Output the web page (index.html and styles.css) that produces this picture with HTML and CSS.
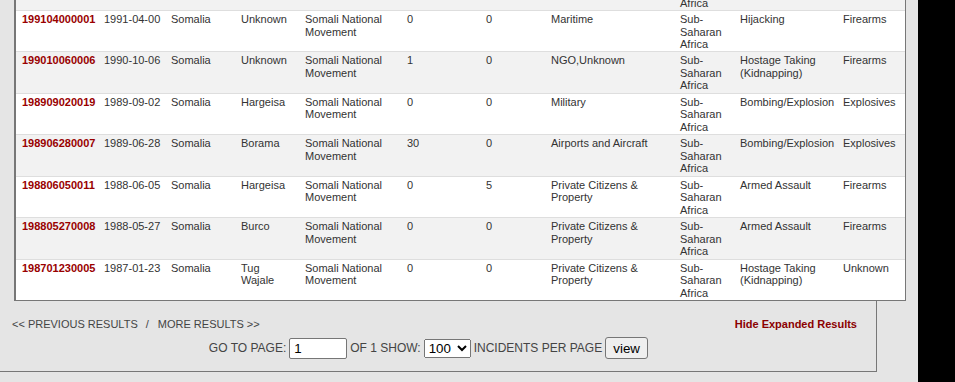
FILE: index.html
```html
<!DOCTYPE html>
<html lang="en">
<head>
<meta charset="utf-8">
<title>Search Results</title>
<link rel="stylesheet" href="styles.css">
</head>
<body>
<div class="page">
  <div class="results">
    <table class="incidents">
      <colgroup>
        <col class="c-id"><col class="c-date"><col class="c-country"><col class="c-city"><col class="c-group"><col class="c-killed"><col class="c-wounded"><col class="c-target"><col class="c-region"><col class="c-attack"><col class="c-weapon">
      </colgroup>
      <tbody>
        <tr class="alt">
          <td class="id"></td><td class="date"></td><td></td><td class="city"></td><td></td><td></td><td></td><td></td><td>Sub-Saharan Africa</td><td class="attack"></td><td></td>
        </tr>
        <tr>
          <td class="id"><a href="#">199104000001</a></td><td class="date">1991-04-00</td><td>Somalia</td><td class="city">Unknown</td><td>Somali National Movement</td><td>0</td><td>0</td><td>Maritime</td><td>Sub-Saharan Africa</td><td class="attack">Hijacking</td><td>Firearms</td>
        </tr>
        <tr class="alt">
          <td class="id"><a href="#">199010060006</a></td><td class="date">1990-10-06</td><td>Somalia</td><td class="city">Unknown</td><td>Somali National Movement</td><td>1</td><td>0</td><td>NGO,Unknown</td><td>Sub-Saharan Africa</td><td class="attack">Hostage Taking (Kidnapping)</td><td>Firearms</td>
        </tr>
        <tr>
          <td class="id"><a href="#">198909020019</a></td><td class="date">1989-09-02</td><td>Somalia</td><td class="city">Hargeisa</td><td>Somali National Movement</td><td>0</td><td>0</td><td>Military</td><td>Sub-Saharan Africa</td><td class="attack">Bombing/Explosion</td><td>Explosives</td>
        </tr>
        <tr class="alt">
          <td class="id"><a href="#">198906280007</a></td><td class="date">1989-06-28</td><td>Somalia</td><td class="city">Borama</td><td>Somali National Movement</td><td>30</td><td>0</td><td>Airports and Aircraft</td><td>Sub-Saharan Africa</td><td class="attack">Bombing/Explosion</td><td>Explosives</td>
        </tr>
        <tr>
          <td class="id"><a href="#">198806050011</a></td><td class="date">1988-06-05</td><td>Somalia</td><td class="city">Hargeisa</td><td>Somali National Movement</td><td>0</td><td>5</td><td>Private Citizens &amp; Property</td><td>Sub-Saharan Africa</td><td class="attack">Armed Assault</td><td>Firearms</td>
        </tr>
        <tr class="alt">
          <td class="id"><a href="#">198805270008</a></td><td class="date">1988-05-27</td><td>Somalia</td><td class="city">Burco</td><td>Somali National Movement</td><td>0</td><td>0</td><td>Private Citizens &amp; Property</td><td>Sub-Saharan Africa</td><td class="attack">Armed Assault</td><td>Firearms</td>
        </tr>
        <tr>
          <td class="id"><a href="#">198701230005</a></td><td class="date">1987-01-23</td><td>Somalia</td><td class="city">Tug Wajale</td><td>Somali National Movement</td><td>0</td><td>0</td><td>Private Citizens &amp; Property</td><td>Sub-Saharan Africa</td><td class="attack">Hostage Taking (Kidnapping)</td><td>Unknown</td>
        </tr>
      </tbody>
    </table>

    <div class="nav">
      <div class="prevnext">
        <a href="#" class="navlink">&lt;&lt; PREVIOUS RESULTS</a><span class="sep">/</span><a href="#" class="navlink">MORE RESULTS &gt;&gt;</a>
      </div>
      <a href="#" class="hide">Hide Expanded Results</a>
    </div>

    <form class="pager">
      <span>GO TO PAGE:</span>
      <input class="page-input" type="text" value="1">
      <span>OF 1 SHOW:</span>
      <select class="per-page">
        <option>100</option>
      </select>
      <span>INCIDENTS PER PAGE</span>
      <button type="button" class="view-btn">view</button>
    </form>
  </div>
</div>
</body>
</html>
```

FILE: styles.css
```css
html, body {
  margin: 0;
  padding: 0;
}

body {
  background: #000;
  font-family: "Liberation Sans", Arial, sans-serif;
  color: #333;
}

.page {
  width: 918px;
  min-height: 100vh;
  background: #e5e5e5;
  overflow: hidden;
}

.results {
  width: 876px;
  border-right: 1px solid #777;
  border-bottom: 1px solid #777;
  padding-bottom: 12px;
}

.incidents {
  margin-top: -32.44px;
  margin-left: 14px;
  width: 892px;
  table-layout: fixed;
  border-collapse: separate;
  border-spacing: 0;
  background: #fff;
  border: 1px solid #777;
  border-left-width: 2px;
  font-size: 11px;
  line-height: 12.48px;
}

.c-id { width: 82px; }
.c-date { width: 67px; }
.c-country { width: 70px; }
.c-city { width: 64px; }
.c-group { width: 102px; }
.c-killed { width: 79px; }
.c-wounded { width: 65px; }
.c-target { width: 129px; }
.c-region { width: 60px; }
.c-attack { width: 103px; }
.c-weapon { width: 68px; }

.incidents td {
  vertical-align: top;
  text-align: left;
  padding: 2px 6px 1px 6px;
  border-top: 1px solid #dedede;
  color: #333;
}

.incidents tr.alt td {
  background: #f2f2f2;
}

.incidents td.id {
  padding-right: 0;
  white-space: nowrap;
}

.incidents td.id a {
  color: #990000;
  font-weight: bold;
  text-decoration: none;
}

.incidents td.date {
  white-space: nowrap;
  padding-right: 0;
}

.incidents td.city {
  padding-right: 10px;
}

.incidents td.attack {
  padding-right: 1px;
}

.nav {
  display: flex;
  justify-content: space-between;
  align-items: baseline;
  margin-top: 17px;
  padding: 0 19px 0 12px;
  font-size: 11px;
  line-height: 13px;
}

.navlink {
  color: #444;
  text-decoration: none;
}

.sep {
  color: #444;
  padding: 0 9px 0 8px;
}

.hide {
  color: #8b0000;
  font-weight: bold;
  text-decoration: none;
}

.pager {
  display: flex;
  justify-content: center;
  align-items: center;
  gap: 3px;
  margin: 6px 19px 0 0;
  height: 22px;
  font-size: 12px;
  color: #444;
}

.page-input {
  box-sizing: border-box;
  width: 58px;
  height: 21px;
  margin: 0;
  padding: 1px 4px;
  border: 1px solid #767676;
  border-radius: 2px;
  background: #fff;
  font-family: "Liberation Sans", Arial, sans-serif;
  font-size: 13.33px;
  color: #000;
}

.per-page {
  box-sizing: border-box;
  width: 47px;
  height: 19px;
  margin: 0;
  font-family: "Liberation Sans", Arial, sans-serif;
  font-size: 13.33px;
  color: #000;
}

.view-btn {
  box-sizing: border-box;
  width: 43px;
  height: 22px;
  margin: 0;
  padding: 0;
  border: 1px solid #767676;
  border-radius: 3px;
  background: #efefef;
  font-family: "Liberation Sans", Arial, sans-serif;
  font-size: 13.33px;
  color: #000;
}
```
